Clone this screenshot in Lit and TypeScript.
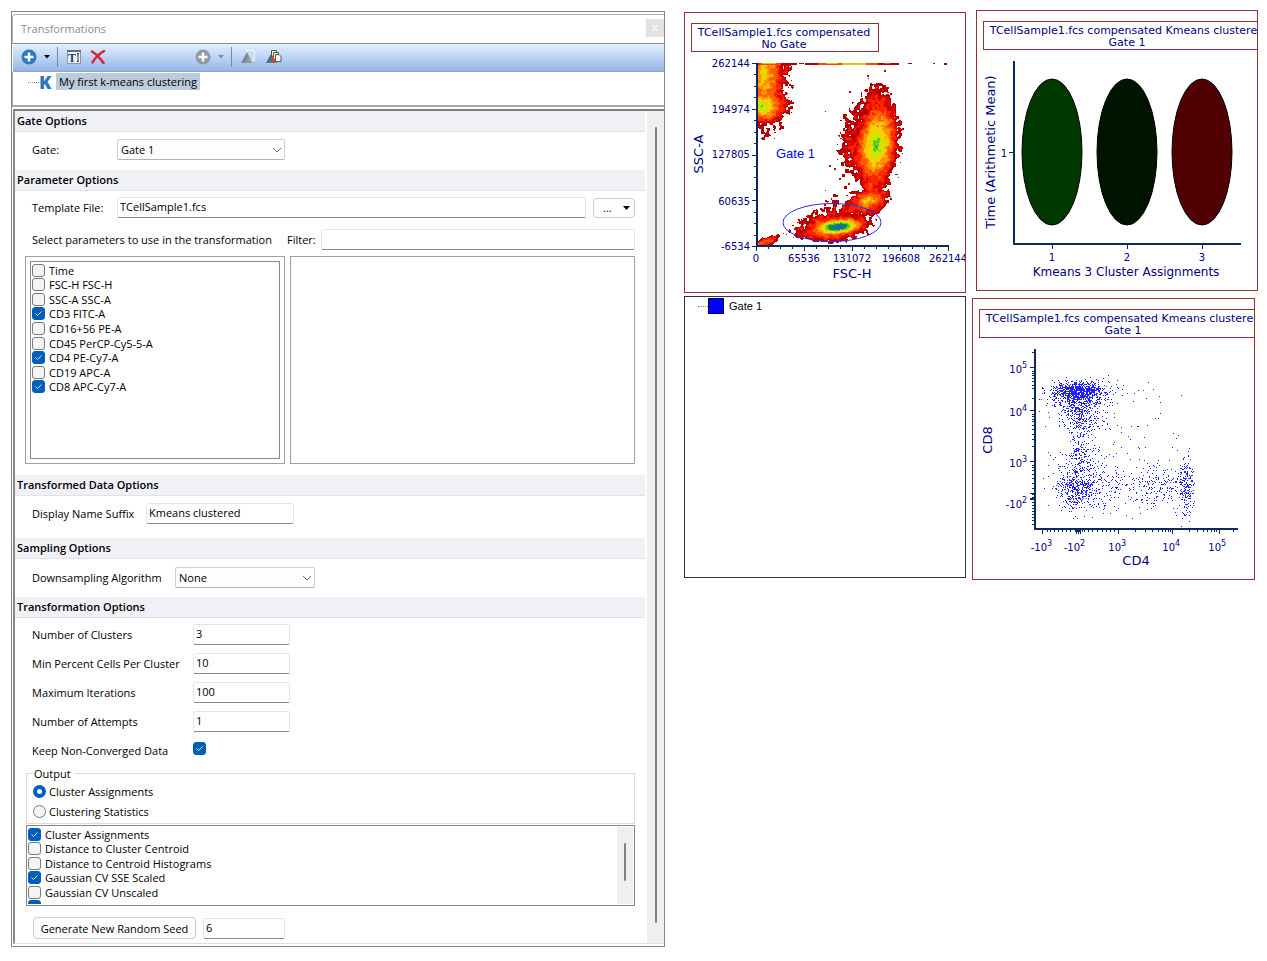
import { LitElement, html, css, svg } from "lit";
import { customElement, property, state } from "lit/decorators.js";

/* Small deterministic generator so that the plots look the same on every load. */
function makeRandom(seed: number) {
  let s = seed >>> 0;
  return () => {
    s = (s + 0x6d2b79f5) >>> 0;
    let t = s;
    t = Math.imul(t ^ (t >>> 15), t | 1);
    t ^= t + Math.imul(t ^ (t >>> 7), t | 61);
    return ((t ^ (t >>> 14)) >>> 0) / 4294967296;
  };
}

function hash(x: number, y: number) {
  let h = Math.imul(x, 374761393) + Math.imul(y, 668265263);
  h = Math.imul(h ^ (h >>> 13), 1274126177);
  return ((h ^ (h >>> 16)) >>> 0) / 4294967296;
}

function noise(x: number, y: number) {
  const xi = Math.floor(x);
  const yi = Math.floor(y);
  const fx = x - xi;
  const fy = y - yi;
  const sx = fx * fx * (3 - 2 * fx);
  const sy = fy * fy * (3 - 2 * fy);
  const a = hash(xi, yi) * (1 - sx) + hash(xi + 1, yi) * sx;
  const b = hash(xi, yi + 1) * (1 - sx) + hash(xi + 1, yi + 1) * sx;
  return (a * (1 - sy) + b * sy) * 2 - 1;
}

type Blob = [cx: number, cy: number, rx: number, ry: number, deg: number, peak: number];

const populations: Blob[] = [
  [79, 62, 25, 56, 0, 0.78],
  [78, 94, 26, 19, 0, 1.05],
  [192, 132, 24, 48, 6, 1.12],
  [183, 126, 24, 36, 10, 0.24],
  [193, 96, 15, 23, 0, 0.24],
  [188, 172, 12, 20, 0, 0.34],
  [184, 188, 21, 14, -20, 0.76],
  [170, 194, 20, 8, -20, 0.22],
  [150, 215, 37, 14, -6, 0.88],
  [132, 215, 23, 8, -12, 0.2],
  [146, 204, 22, 8, -30, 0.06],
  [80, 230, 16, 5, -18, 0.38],
];
const core: Blob = [156, 214, 24, 8, -6, 0.84];

/* Strong populations fall off as cones, faint ones as flat domes. */
function lift([cx, cy, rx, ry, deg, peak]: Blob, x: number, y: number) {
  const r = (deg * Math.PI) / 180;
  const dx = x - cx;
  const dy = y - cy;
  const u = (dx * Math.cos(r) + dy * Math.sin(r)) / rx;
  const v = (-dx * Math.sin(r) + dy * Math.cos(r)) / ry;
  const d = u * u + v * v;
  return peak * (1 - (peak > 0.5 ? Math.sqrt(d) : d));
}

const bands: [number, string][] = [
  [0.12, "#b40000"],
  [0.22, "#dc0800"],
  [0.36, "#ff2400"],
  [0.5, "#ff5c00"],
  [0.64, "#ff9400"],
  [0.8, "#f8d000"],
  [0.98, "#c8e800"],
  [1.16, "#5cc820"],
  [1.4, "#00905c"],
  [1.54, "#2060d8"],
  [9, "#8020f0"],
];

function buildDensity() {
  const paths = bands.map(() => "");
  for (let y = 53; y < 234; y++) {
    let start = 73;
    let current = -1;
    for (let x = 73; x <= 230; x++) {
      let band = -1;
      if (x < 230) {
        let f = -9;
        for (const p of populations) f = Math.max(f, lift(p, x, y));
        f += Math.max(0, lift(core, x, y));
        if (f > -0.45) {
          const coarse = f < 0.16 ? 0.2 : 0.12;
          f += noise(x / 3, y / 3) * coarse + noise(x / 1.7, y / 1.7) * 0.06;
          if (f > 0) band = bands.findIndex(([limit]) => f < limit);
        }
      }
      if (band !== current) {
        if (current >= 0) paths[current] += `M${start} ${y}h${x - start}v1h${start - x}z`;
        current = band;
        start = x;
      }
    }
  }
  return paths;
}
const densityPaths = buildDensity();

const strays: [number, number, number][] = [
  [105, 72, 2], [109, 73, 1], [104, 88, 2], [106, 94, 3], [108, 90, 2], [107, 100, 1], [104, 85, 1],
  [141, 99, 1], [165, 79, 2], [183, 63, 2], [184, 66, 1], [200, 58, 2], [198, 73, 4], [199, 76, 3],
  [206, 81, 2], [162, 117, 2], [160, 128, 2], [145, 153, 2], [150, 156, 2], [157, 151, 3],
  [158, 162, 3], [155, 166, 2], [141, 178, 1], [206, 186, 2], [149, 182, 3], [148, 188, 3], [152, 183, 2],
  [136, 196, 2], [131, 200, 3], [140, 192, 2], [119, 206, 4], [114, 207, 2], [93, 224, 2], [99, 221, 1],
  [214, 165, 1], [213, 104, 1], [218, 116, 2], [181, 77, 3], [185, 80, 3], [190, 79, 2], [177, 96, 3],
  [160, 174, 3], [164, 171, 2], [161, 157, 4],
];

function buildScatter() {
  const rnd = makeRandom(41);
  const gauss = () => Math.sqrt(-2 * Math.log(rnd() + 1e-9)) * Math.cos(6.28318 * rnd());
  const dots: string[] = [];
  const put = (x: number, y: number) => {
    const px = Math.round(x);
    const py = Math.round(y);
    if (px > 66 && px < 225 && py > 76 && py < 230) dots.push(`M${px} ${py}h1v1h-1z`);
  };
  for (let i = 0; i < 860; i++) put(107 + gauss() * 13, 93 + gauss() * 5);
  for (let i = 0; i < 180; i++) put(107 + gauss() * 14, 99 + Math.abs(gauss()) * 9);
  for (let i = 0; i < 190; i++) put(107 + gauss() * 13, 103 + rnd() * 28);
  for (let i = 0; i < 240; i++) put(108 + gauss() * 7, 103 + rnd() * 70);
  for (let i = 0; i < 230; i++) put(106 + gauss() * 13, 150 + rnd() * 60);
  for (let i = 0; i < 380; i++) put(106 + gauss() * 10, 189 + gauss() * 11);
  for (let i = 0; i < 250; i++) put(125 + rnd() * 90, 188 + gauss() * 11);
  for (let i = 0; i < 80; i++) put(188 + gauss() * 13, 190 + gauss() * 10);
  for (let i = 0; i < 200; i++) put(214 + gauss() * 4, 188 + gauss() * 14);
  for (let i = 0; i < 36; i++) put(135 + rnd() * 75, 84 + rnd() * 90);
  for (let i = 0; i < 12; i++) put(140 + gauss() * 9, 90 + gauss() * 8);
  return dots.join("");
}
const scatterPath = buildScatter();

const plotStyles = css`
  :host {
    display: block;
  }
  svg {
    display: block;
    width: 100%;
    height: auto;
    overflow: hidden;
  }
  text {
    font-family: "DejaVu Sans", Verdana, sans-serif;
    font-size: 10px;
    fill: #000080;
  }
  .title {
    font-size: 11px;
    text-anchor: middle;
  }
  .name {
    font-size: 13px;
    text-anchor: middle;
  }
  .long {
    font-size: 12px;
    text-anchor: middle;
  }
  .mid {
    text-anchor: middle;
  }
  .end {
    text-anchor: end;
  }
  .exp {
    font-size: 8px;
  }
  .frame {
    fill: #fff;
    stroke: #963034;
  }
  .axis {
    fill: none;
    stroke: #0a2a5e;
    stroke-width: 2;
  }
  .tick {
    fill: none;
    stroke: #0a2a5e;
  }
  .gate {
    fill: none;
    stroke: #2a2af0;
  }
  .gate-name {
    font-family: "Liberation Sans", Arial, sans-serif;
    font-size: 13px;
    fill: #0000ff;
  }
`;

const ticksX = (from: number, to: number, n: number, y: number) =>
  Array.from({ length: n + 1 }, (_, i) => {
    const x = Math.round(from + ((to - from) * i) / n);
    return `M${x}.5 ${y}v${i % 4 === 0 ? 4 : 2}`;
  }).join("");

const ticksY = (from: number, to: number, n: number, x: number) =>
  Array.from({ length: n + 1 }, (_, i) => {
    const y = Math.round(from + ((to - from) * i) / n);
    return `M${x} ${y}.5h-${i % 4 === 0 ? 4 : 2}`;
  }).join("");

@customElement("density-plot")
class DensityPlot extends LitElement {
  static styles = plotStyles;
  render() {
    return html`<svg viewBox="0 0 282 281" role="img" aria-label="SSC-A against FSC-H">
      <rect class="frame" x="0.5" y="0.5" width="281" height="280"></rect>
      <rect class="frame" x="7.5" y="11.5" width="187" height="28"></rect>
      <text class="title" x="100" y="24">TCellSample1.fcs compensated</text>
      <text class="title" x="100" y="36">No Gate</text>
      <g shape-rendering="crispEdges">
        ${densityPaths.map((d, i) => svg`<path d=${d} fill=${bands[i][1]}></path>`)}
        ${strays.map(([x, y, s]) => svg`<rect x=${x} y=${y} width=${s} height=${s} fill="#b40000"></rect>`)}
        <path fill="#b40000" d="M73 51h40v2h-40zM115 51h5v1h-5zM121 51h94v2h-94zM224 51h4v1h-4zM249 51h2v1h-2zM260 51h3v2h-3z"></path>
        <path fill="#ff4000" d="M75 51h22v2h-22zM134 51h60v2h-60zM200 51h6v1h-6z"></path>
        <path fill="#f6c000" d="M78 51h14v1h-14zM142 51h12v1h-12zM158 51h24v2h-24z"></path>
        <path fill="#a8e000" d="M80 51h6v1h-6zM162 51h14v1h-14z"></path>
      </g>
      <path class="axis" d="M73 51V234H265"></path>
      <path class="tick" d=${ticksY(51, 234, 16, 72) + ticksX(72, 264, 16, 235)}></path>
      <ellipse class="gate" cx="148" cy="210.500" rx="49" ry="19"></ellipse>
      <text class="gate-name" x="92" y="146">Gate 1</text>
      <text class="end" x="66" y="55">262144</text>
      <text class="end" x="66" y="101">194974</text>
      <text class="end" x="66" y="146">127805</text>
      <text class="end" x="66" y="193">60635</text>
      <text class="end" x="66" y="238">-6534</text>
      <text class="mid" x="72" y="250">0</text>
      <text class="mid" x="120" y="250">65536</text>
      <text class="mid" x="168" y="250">131072</text>
      <text class="mid" x="217" y="250">196608</text>
      <text class="mid" x="264" y="250">262144</text>
      <text class="name" x="168" y="266">FSC-H</text>
      <text class="name" transform="translate(19 142) rotate(-90)">SSC-A</text>
      <path fill="none" stroke="#963034" d="M281.500 0V281"></path>
    </svg>`;
  }
}

@customElement("cluster-plot")
class ClusterPlot extends LitElement {
  static styles = plotStyles;
  render() {
    const clusters: [number, string][] = [
      [76, "#003800"],
      [151, "#001400"],
      [226, "#500000"],
    ];
    return html`<svg viewBox="0 0 282 281" role="img" aria-label="Kmeans 3 Cluster Assignments">
      <rect class="frame" x="0.5" y="0.5" width="281" height="280"></rect>
      <rect class="frame" x="7.500" y="11.500" width="290" height="28"></rect>
      <text class="title" x="151" y="24">TCellSample1.fcs compensated Kmeans clustered</text>
      <text class="title" x="151" y="36">Gate 1</text>
      ${clusters.map(
        ([x, fill], i) => svg`
          <ellipse cx=${x} cy="142" rx="30" ry="73" fill=${fill} stroke="#000"></ellipse>
          <text class="mid" x=${x} y="251">${i + 1}</text>`
      )}
      <path class="axis" d="M38 51V234H265"></path>
      <path class="tick" d="M37 142.500h-4M76.500 235v4M151.500 235v4M226.500 235v4"></path>
      <text class="end" x="31" y="147">1</text>
      <text class="long" x="150" y="266">Kmeans 3 Cluster Assignments</text>
      <text class="name" transform="translate(19 142) rotate(-90)">Time (Arithmetic Mean)</text>
      <path fill="none" stroke="#963034" d="M281.500 0V281"></path>
    </svg>`;
  }
}

@customElement("scatter-plot")
class ScatterPlot extends LitElement {
  static styles = plotStyles;
  private power(x: number, y: number, base: string, exp: string) {
    return svg`<text class="end" x=${x} y=${y}>${base}</text><text class="exp" x=${x} y=${y - 5}>${exp}</text>`;
  }
  render() {
    const yMinor = [54, 73, 75, 77, 80, 83, 87, 90, 100, 116, 118, 121, 123, 127, 131, 136, 141, 148, 167, 169, 172, 176, 180, 185, 190, 196, 199, 201, 204, 207, 210, 213, 216, 219, 222, 226];
    const xMinor = [75, 78, 82, 86, 90, 94, 98, 103, 105, 107, 110, 112, 116, 120, 125, 130, 134, 138, 142, 163, 173, 180, 186, 190, 193, 196, 198, 217, 225, 231, 235, 239, 242, 244, 261];
    return html`<svg viewBox="0 0 283 282" role="img" aria-label="CD8 against CD4">
      <rect class="frame" x="0.5" y="0.5" width="282" height="281"></rect>
      <rect class="frame" x="7.500" y="11.500" width="290" height="28"></rect>
      <text class="title" x="151" y="24">TCellSample1.fcs compensated Kmeans clustered</text>
      <text class="title" x="151" y="36">Gate 1</text>
      <path shape-rendering="crispEdges" fill="#2020ff" d=${scatterPath}></path>
      <path class="axis" d="M63 51V231H266"></path>
      <path class="tick" d=${yMinor.map((y) => `M62 ${y}.5h-2`).join("") + xMinor.map((x) => `M${x}.5 232v2`).join("")}></path>
      <path class="tick" d="M62 69.500h-4M62 112.500h-4M62 163.500h-4M62 195.500h-4M62 200.500h-4M62 201.500h-4M70.500 232v4M104.500 232v4M106.500 232v4M108.500 232v4M146.500 232v4M200.500 232v4M247.500 232v4"></path>
      ${this.power(50, 75, "10", "5")}
      ${this.power(50, 118, "10", "4")}
      ${this.power(50, 169, "10", "3")}
      ${this.power(50, 210, "-10", "2")}
      ${this.power(75, 253, "-10", "3")}
      ${this.power(108, 253, "-10", "2")}
      ${this.power(149, 253, "10", "3")}
      ${this.power(203, 253, "10", "4")}
      ${this.power(249, 253, "10", "5")}
      <text class="name" x="164" y="267">CD4</text>
      <text class="name" transform="translate(20 142) rotate(-90)">CD8</text>
      <path fill="none" stroke="#963034" d="M282.500 0V282"></path>
    </svg>`;
  }
}

const controlStyles = css`
  * {
    box-sizing: border-box;
  }
  button,
  input,
  select {
    font: inherit;
    color: inherit;
    margin: 0;
  }
  .text {
    height: 21px;
    width: 100%;
    min-width: 0;
    padding: 0 2px 2px;
    border: 1px solid #e6e6e6;
    border-bottom-color: #8c8c8c;
    border-radius: 2px;
    background: #fff;
  }
  .tick {
    appearance: none;
    flex: none;
    width: 13px;
    height: 13px;
    border: 1px solid #7a7a7a;
    border-radius: 3px;
    background: #f4f4f4;
  }
  .tick:checked {
    border-color: #005fb8;
    background: #005fb8
      url("data:image/svg+xml,%3Csvg xmlns='http://www.w3.org/2000/svg' viewBox='0 0 11 11'%3E%3Cpath d='M2.500 5.500l2 2 4-4' fill='none' stroke='%23cfe4f7'/%3E%3C/svg%3E")
      center / 11px 11px no-repeat;
  }
  .radio {
    appearance: none;
    flex: none;
    width: 13px;
    height: 13px;
    border: 1px solid #7a7a7a;
    border-radius: 50%;
    background: #f4f4f4;
  }
  .radio:checked {
    border: 4px solid #005fb8;
    background: #fff;
  }
`;

interface Choice {
  label: string;
  on: boolean;
}

@customElement("check-list")
class CheckList extends LitElement {
  static styles = [
    controlStyles,
    css`
      :host {
        display: block;
      }
      .rows {
        display: grid;
        grid-auto-rows: minmax(0, 1fr);
      }
      .nine {
        height: 131px;
      }
      .six {
        height: 87px;
      }
      label {
        display: flex;
        align-items: center;
        gap: 4px;
        white-space: nowrap;
      }
    `,
  ];
  @property({ attribute: false }) items: Choice[] = [];
  render() {
    return html`<div class="rows ${this.items.length === 9 ? "nine" : "six"}">
      ${this.items.map(
        (i) => html`<label><input class="tick" type="checkbox" .checked=${i.on} />${i.label}</label>`
      )}
    </div>`;
  }
}

@customElement("drop-down")
class DropDown extends LitElement {
  static styles = [
    controlStyles,
    css`
      :host {
        display: grid;
        align-items: center;
      }
      select,
      svg {
        grid-area: 1 / 1;
      }
      select {
        appearance: none;
        width: 100%;
        height: 21px;
        padding: 0 20px 0 3px;
        border: 1px solid #d0d0d0;
        border-bottom-color: #b4b4b4;
        border-radius: 2px;
        background: #fdfdfd;
      }
      svg {
        justify-self: end;
        margin-right: 3px;
        pointer-events: none;
      }
    `,
  ];
  @property() value = "";
  @property() name = "";
  render() {
    return html`<select aria-label=${this.name}>
        <option>${this.value}</option>
      </select>
      <svg width="10" height="6" viewBox="0 0 10 6" fill="none" stroke="#6a6a6a"><path d="M1 1l4 4 4-4"></path></svg>`;
  }
}

@customElement("transform-panel")
class TransformPanel extends LitElement {
  static styles = [
    controlStyles,
    css`
      :host {
        display: block;
        font-family: "Open Sans", "Noto Sans", sans-serif;
        font-size: 11px;
        line-height: 15px;
        color: #000;
      }
      .window {
        border: 1px solid #868686;
        padding-top: 2px;
        background: #fff;
      }
      .titlebar {
        display: flex;
        align-items: center;
        justify-content: space-between;
        height: 30px;
        padding: 0 0 2px 8px;
        border-top: 1px solid #b0b0b0;
        border-left: 1px solid #b0b0b0;
        border-bottom: 1px solid #8a9096;
        border-top-left-radius: 4px;
        color: #8c8c8c;
      }
      .titlebar h1 {
        margin: 0;
        font-size: 11px;
        font-weight: 400;
      }
      .close {
        width: 18px;
        height: 18px;
        padding: 0 0 2px;
        border: 0;
        background: #e2e2e2;
        color: #f6f6f6;
        font-weight: 700;
        line-height: 14px;
      }
      .toolbar {
        display: flex;
        align-items: center;
        height: 28px;
        padding: 0 0 2px 8px;
        margin-left: 1px;
        border-bottom: 1px solid #98a4b4;
        background: linear-gradient(#e4f0fe, #94b6e8);
      }
      .tool {
        display: flex;
        align-items: center;
        padding: 0;
        border: 0;
        background: none;
      }
      .add {
        gap: 7px;
      }
      .sep {
        width: 1px;
        height: 20px;
        margin: 0 9px 0 7px;
        background: #7688a0;
      }
      .rename {
        margin-right: 9px;
      }
      .second {
        margin-left: 89px;
      }
      .export {
        margin-right: 10px;
      }
      .tree {
        display: flex;
        align-items: flex-start;
        height: 35px;
        padding: 1px 0 0 15px;
        border-bottom: 2px solid #a8a8a8;
        border-left: 1px solid #a8a8a8;
      }
      .branch {
        width: 11px;
        margin-top: 9px;
        border-top: 1px dotted #909090;
      }
      .kmark {
        width: 12px;
        margin-right: 5px;
        font: 800 18px/18px "Open Sans", "Noto Sans", sans-serif;
        color: #2f74ba;
      }
      .item {
        padding: 1px 3px;
        background: #bccbdc;
      }
      .body {
        display: grid;
        grid-template-columns: minmax(0, 1fr) 17px;
        column-gap: 2px;
        margin: 2px 0 2px 1px;
        border-top: 2px solid #7c7c7c;
        border-left: 2px solid #8a8a8a;
        border-bottom: 1px solid #e0e0e0;
      }
      .track {
        display: flex;
        justify-content: center;
        padding: 16px 0 20px;
        background: #efefef;
      }
      .thumb {
        width: 2px;
        border-radius: 1px;
        background: #808080;
      }
      h2 {
        margin: 0;
        height: 21px;
        padding-left: 2px;
        border-bottom: 1px solid #e0e2e6;
        background: #f0f1f6;
        font-size: 11px;
        line-height: 20px;
        font-weight: 600;
      }
      .section {
        display: grid;
        padding: 8px 10px 9px 17px;
        align-items: center;
      }
      .gate {
        grid-template-columns: 85px 168px;
        padding-top: 7px;
        padding-bottom: 10px;
      }
      .files {
        grid-template-columns: 85px minmax(0, 1fr) 42px;
        padding-top: 6px;
        padding-bottom: 11px;
      }
      .browse {
        display: flex;
        align-items: center;
        justify-content: space-between;
        height: 20px;
        padding: 0 4px 0 9px;
        border: 1px solid #cacaca;
        border-radius: 4px;
        background: #fdfdfd;
      }
      .files .text {
        width: calc(100% - 7px);
      }
      .filter {
        grid-template-columns: 249px 28px minmax(0, 1fr);
        column-gap: 6px;
        padding-top: 0;
        padding-bottom: 6px;
      }
      .lists {
        grid-template-columns: 260px minmax(0, 1fr);
        column-gap: 5px;
        padding: 0 10px 11px;
        height: 219px;
        align-items: stretch;
      }
      .box {
        padding: 4px;
        border: 1px solid #a0a0a0;
      }
      .inner {
        height: 100%;
        padding: 1px;
        border: 1px solid #828790;
      }
      .suffix {
        grid-template-columns: 114px 148px;
        padding-top: 7px;
        padding-bottom: 14px;
      }
      .sampling {
        grid-template-columns: 143px 140px;
      }
      .numbers {
        grid-template-columns: 161px 97px;
        grid-auto-rows: 21px;
        row-gap: 8px;
        padding-top: 6px;
        padding-bottom: 0;
      }
      .numbers .tick {
        margin-top: -4px;
      }
      fieldset {
        margin: 5px 10px 1px 11px;
        padding: 0 6px 2px;
        border: 1px solid #dcdcdc;
      }
      legend {
        padding: 0 4px 0 1px;
      }
      .option {
        display: flex;
        align-items: center;
        gap: 3px;
        height: 20px;
      }
      .stats {
        display: grid;
        grid-template-columns: minmax(0, 1fr) 16px;
        height: 81px;
        margin: 0 10px 0 11px;
        padding: 1px;
        border: 1px solid #828790;
        overflow: hidden;
      }
      .clip {
        overflow: hidden;
        height: 77px;
      }
      .mini {
        padding: 16px 0 23px;
      }
      .seed {
        grid-template-columns: 163px 82px;
        column-gap: 7px;
        padding: 11px 10px 4px 18px;
      }
      .seed button {
        height: 22px;
        padding: 0;
        border: 1px solid #cacaca;
        border-radius: 4px;
        background: #fdfdfd;
        white-space: nowrap;
      }
    `,
  ];

  @state() private parameters: Choice[] = [
    { label: "Time", on: false },
    { label: "FSC-H FSC-H", on: false },
    { label: "SSC-A SSC-A", on: false },
    { label: "CD3 FITC-A", on: true },
    { label: "CD16+56 PE-A", on: false },
    { label: "CD45 PerCP-Cy5-5-A", on: false },
    { label: "CD4 PE-Cy7-A", on: true },
    { label: "CD19 APC-A", on: false },
    { label: "CD8 APC-Cy7-A", on: true },
  ];

  @state() private outputs: Choice[] = [
    { label: "Cluster Assignments", on: true },
    { label: "Distance to Cluster Centroid", on: false },
    { label: "Distance to Centroid Histograms", on: false },
    { label: "Gaussian CV SSE Scaled", on: true },
    { label: "Gaussian CV Unscaled", on: false },
    { label: "", on: true },
  ];

  private plus(fill: string, arrow: string) {
    return html`<svg width="16" height="16" viewBox="0 0 16 16">
        <circle cx="8" cy="8" r="7.500" fill=${fill}></circle>
        <path d="M8 3.500v9M3.500 8h9" stroke="#fff" stroke-width="2.500"></path>
      </svg>
      <svg width="6" height="4" viewBox="0 0 6 4"><path d="M0 0h6L3 3.500z" fill=${arrow}></path></svg>`;
  }

  private number(id: string, label: string, value: string) {
    return html`<label for=${id}>${label}</label><input class="text" id=${id} .value=${value} />`;
  }

  render() {
    return html`<section class="window">
      <header class="titlebar">
        <h1>Transformations</h1>
        <button class="close" aria-label="Close">x</button>
      </header>
      <div class="toolbar">
        <button class="tool add" aria-label="Add transformation">${this.plus("#2c78c4", "#000")}</button>
        <span class="sep"></span>
        <button class="tool rename" aria-label="Rename">
          <svg width="14" height="14" viewBox="0 0 14 14">
            <rect x="0.500" y="0.500" width="13" height="13" fill="#eef3f8" stroke="#8898a8"></rect>
            <path d="M0 1h14" stroke="#5a7088" stroke-width="2"></path>
            <text x="1" y="12" font-family="Liberation Serif" font-weight="700" font-size="12" fill="#1e3e6e">T</text>
            <path d="M11 3.500v8M10 3.500h2M10 11.500h2" stroke="#333" fill="none"></path>
          </svg>
        </button>
        <button class="tool" aria-label="Delete">
          <svg width="16" height="14" viewBox="0 0 16 14" fill="none" stroke="#d8262c" stroke-linecap="round">
            <path d="M2 1.500C6 4 10 8 13.500 13" stroke-width="2.500"></path>
            <path d="M14 1C9 4 5 8 2.500 12.500" stroke-width="2.500"></path>
          </svg>
        </button>
        <button class="tool add second" aria-label="Add output">${this.plus("#8f9aa6", "#8090a4")}</button>
        <span class="sep"></span>
        <button class="tool export" aria-label="Export selection">
          <svg width="15" height="14" viewBox="0 0 15 14">
            <path d="M5.500 0.500h8v10h-6z" fill="#cfdaea" stroke="#fff" stroke-dasharray="2 1"></path>
            <path d="M0 13L6 2l5 11z" fill="#7b8896"></path>
            <path d="M4 13L7.500 5 11 13z" fill="#909ba6"></path>
          </svg>
        </button>
        <button class="tool" aria-label="Export gates">
          <svg width="16" height="14" viewBox="0 0 16 14">
            <path d="M0 13L6 2l4 11z" fill="#3c6fa8"></path>
            <path d="M5.500 0.500h5v7h-5z" fill="#f4f4f0" stroke="#555"></path>
            <path d="M7.500 2.500h5v7h-5z" fill="#f4f4f0" stroke="#555"></path>
            <path d="M9.500 4.500h3.500l2 2v5h-5.500z" fill="#f8f8f4" stroke="#555"></path>
            <path d="M4 13L6.500 5 10 13z" fill="#d8402e"></path>
            <path d="M2 13l2-3 2 3zM7.500 13l1.500-3 2 3z" fill="#3c8a5a"></path>
          </svg>
        </button>
      </div>
      <div class="tree">
        <span class="branch"></span><span class="kmark">K</span>
        <span class="item">My first k-means clustering</span>
      </div>
      <div class="body">
        <form>
          <h2>Gate Options</h2>
          <div class="section gate">
            <span>Gate:</span><drop-down name="Gate" value="Gate 1"></drop-down>
          </div>
          <h2>Parameter Options</h2>
          <div class="section files">
            <label for="file">Template File:</label>
            <input class="text" id="file" .value=${"TCellSample1.fcs"} />
            <button class="browse" type="button" aria-label="Browse">
              <span>...</span>
              <svg width="7" height="4" viewBox="0 0 7 4"><path d="M0 0h7L3.500 4z"></path></svg>
            </button>
          </div>
          <div class="section filter">
            <span>Select parameters to use in the transformation</span>
            <label for="filter">Filter:</label><input class="text" id="filter" />
          </div>
          <div class="section lists">
            <div class="box"><div class="inner"><check-list .items=${this.parameters}></check-list></div></div>
            <div class="box"></div>
          </div>
          <h2>Transformed Data Options</h2>
          <div class="section suffix">
            ${this.number("suffix", "Display Name Suffix", "Kmeans clustered")}
          </div>
          <h2>Sampling Options</h2>
          <div class="section sampling">
            <span>Downsampling Algorithm</span>
            <drop-down name="Downsampling Algorithm" value="None"></drop-down>
          </div>
          <h2>Transformation Options</h2>
          <div class="section numbers">
            ${this.number("clusters", "Number of Clusters", "3")}
            ${this.number("percent", "Min Percent Cells Per Cluster", "10")}
            ${this.number("iterations", "Maximum Iterations", "100")}
            ${this.number("attempts", "Number of Attempts", "1")}
            <label for="keep">Keep Non-Converged Data</label>
            <input class="tick" id="keep" type="checkbox" checked />
          </div>
          <fieldset>
            <legend>Output</legend>
            <label class="option"><input class="radio" type="radio" name="output" checked />Cluster Assignments</label>
            <label class="option"><input class="radio" type="radio" name="output" />Clustering Statistics</label>
          </fieldset>
          <div class="stats">
            <div class="clip"><check-list .items=${this.outputs}></check-list></div>
            <div class="track mini"><div class="thumb"></div></div>
          </div>
          <div class="section seed">
            <button type="button">Generate New Random Seed</button>
            <input class="text" aria-label="Random seed" .value=${"6"} />
          </div>
        </form>
        <div class="track"><div class="thumb"></div></div>
      </div>
    </section>`;
  }
}

@customElement("gate-tree")
class GateTree extends LitElement {
  static styles = css`
    :host {
      display: flex;
      align-items: flex-start;
      box-sizing: border-box;
      aspect-ratio: 1;
      padding: 1px 0 0 13px;
      border: 1px solid #333;
      background: #fff;
      font: 11px/17px "Liberation Sans", Arial, sans-serif;
      color: #000;
    }
    .branch {
      width: 10px;
      margin-top: 8px;
      border-top: 1px dotted #909090;
    }
    .swatch {
      box-sizing: border-box;
      width: 16px;
      height: 16px;
      margin-right: 5px;
      border: 1px solid #000060;
      background: #0000ff;
    }
  `;
  render() {
    return html`<span class="branch"></span><span class="swatch"></span><span>Gate 1</span>`;
  }
}

@customElement("app-root")
class AppRoot extends LitElement {
  static styles = css`
    :host {
      display: grid;
      grid-template-columns: minmax(0, 654fr) minmax(0, 574fr);
      column-gap: 19px;
      align-items: start;
      padding: 11px 9px 14px 11px;
      background: #fff;
    }
    .plots {
      display: grid;
      grid-template-columns: minmax(0, 282fr) minmax(0, 286fr);
      column-gap: 6px;
      align-items: start;
    }
    .column {
      display: grid;
      gap: 3px;
      padding-top: 1px;
    }
    .right {
      gap: 7px;
      padding-top: 0;
      margin-top: -1px;
    }
    .cluster {
      margin-left: 4px;
    }
    .scatter {
      margin-right: 3px;
    }
  `;
  render() {
    return html`<transform-panel></transform-panel>
      <main class="plots">
        <div class="column">
          <density-plot></density-plot>
          <gate-tree></gate-tree>
        </div>
        <div class="column right">
          <cluster-plot class="cluster"></cluster-plot>
          <scatter-plot class="scatter"></scatter-plot>
        </div>
      </main>`;
  }
}
